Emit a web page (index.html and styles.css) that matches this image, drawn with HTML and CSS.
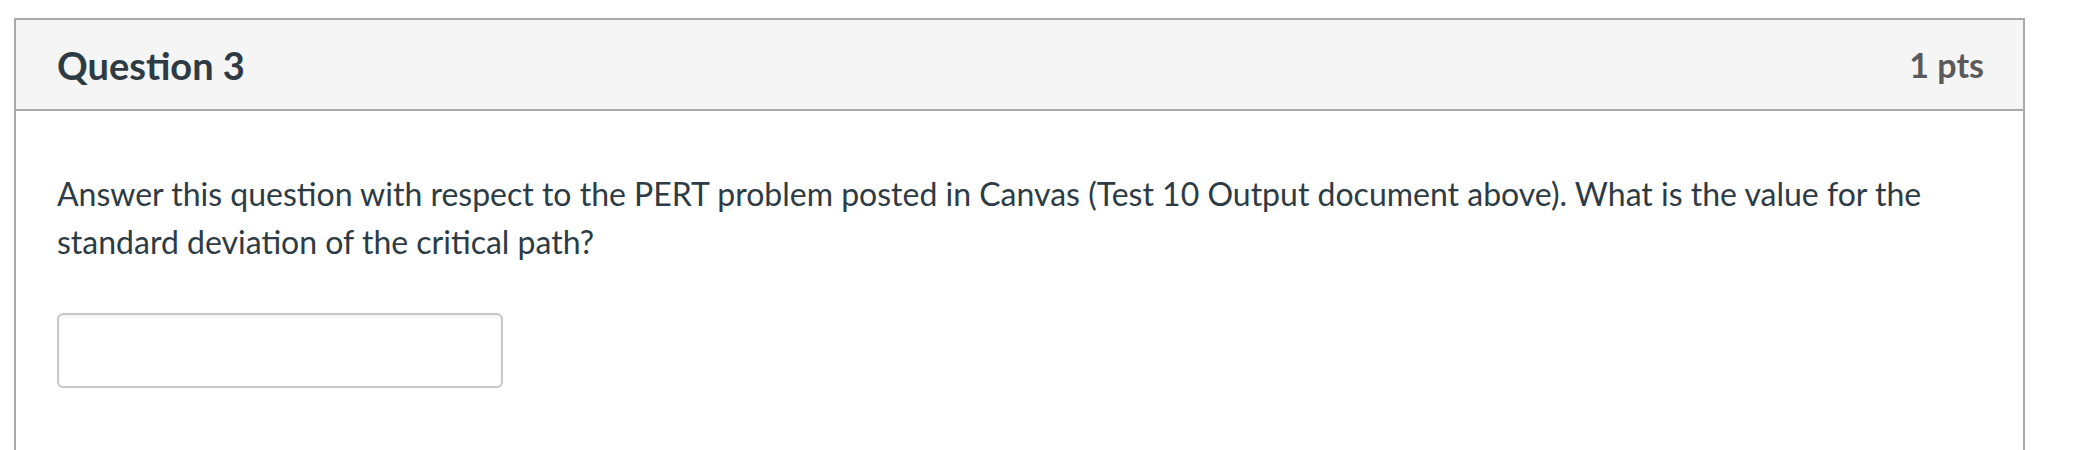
FILE: index.html
```html
<!DOCTYPE html>
<html>
<head>
<meta charset="utf-8">
<link rel="stylesheet" href="styles.css">
</head>
<body>
<div class="page">
  <div class="question">
    <div class="q-header">
      <span class="q-title">Question 3</span>
      <span class="q-points">1 pts</span>
    </div>
    <div class="q-body">
      <div class="q-text">Answer this question with respect to the PERT problem posted in Canvas (Test 10 Output document above). What is the value for the standard deviation of the critical path?</div>
      <input class="q-input" type="text">
    </div>
  </div>
</div>
</body>
</html>
```
FILE: styles.css
```css
html, body {
  margin: 0;
  padding: 0;
  background: #ffffff;
}
.page {
  padding: 18px 0 0 14px;
  width: 2011px;
}
.question {
  border: 2px solid #aaaaaa;
  border-bottom: none;
  font-family: Lato, "Open Sans", sans-serif;
  color: #2d3b45;
  height: 432px;
  box-sizing: border-box;
}
.q-header {
  background: #f5f5f5;
  border-bottom: 2px solid #aaaaaa;
  height: 91px;
  box-sizing: border-box;
  display: flex;
  justify-content: space-between;
  align-items: center;
  padding: 0 39px 0 41px;
}
.q-title {
  font-weight: 700;
  font-size: 38px;
  color: #2d3b45;
}
.q-points {
  font-weight: 700;
  font-size: 34px;
  color: #5a5a5a;
}
.q-body {
  padding: 59px 41px 0 41px;
}
.q-text {
  font-size: 32px;
  line-height: 48px;
}
.q-input {
  display: block;
  margin-top: 47px;
  width: 446px;
  height: 75px;
  box-sizing: border-box;
  border: 2px solid #c8c8c8;
  border-radius: 6px;
  box-shadow: inset 0 2px 3px rgba(0,0,0,0.06);
  background: #fff;
  padding: 0;
}
```
